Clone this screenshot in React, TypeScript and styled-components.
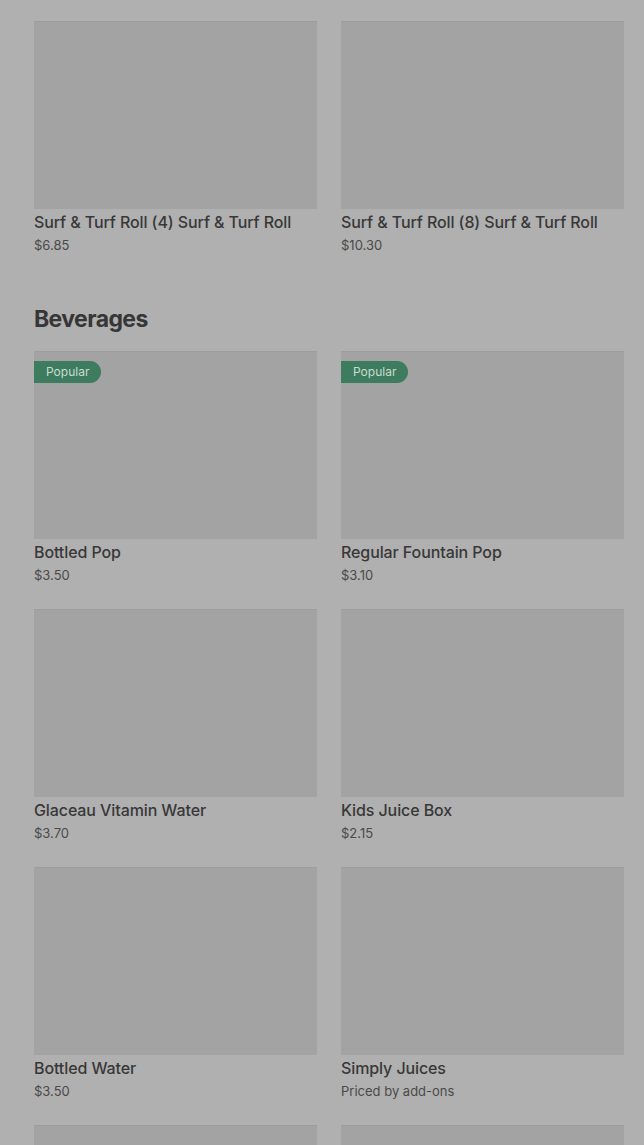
import * as React from 'react';
import styled, { createGlobalStyle } from "styled-components";

type Item = {
    name: string,
    price: string,
    popular?: boolean,
};

const GlobalStyle = createGlobalStyle`
    html, body {
        margin: 0;
        padding: 0;
        background: #b0b0b0;
    }
    body {
        font-family: Inter, "Noto Sans", "Liberation Sans", sans-serif;
        color: #383838;
        overflow: hidden;
    }
`;

const Page = styled.main`
    padding: 21px 20px 0 34px;
    height: 1145px;
    overflow: hidden;
    box-sizing: border-box;
`;

const Section = styled.section`
    margin-bottom: 48px;
`;

const SectionHeading = styled.h2`
    margin: 0 0 16px;
    font-size: 23px;
    line-height: 32px;
    font-weight: 700;
    letter-spacing: -0.6px;
    color: #363636;
`;

const Grid = styled.div`
    display: grid;
    grid-template-columns: 283px 283px;
    column-gap: 24px;
    row-gap: 24px;
`;

const Card = styled.div`
    display: flex;
    flex-direction: column;
`;

const Thumb = styled.div`
    position: relative;
    height: 188px;
    background: #a3a3a3;
    border-top: 1px solid #9d9d9d;
    box-sizing: border-box;
`;

const Badge = styled.span`
    position: absolute;
    top: 9px;
    left: 0;
    padding: 0 12px;
    height: 22px;
    line-height: 22px;
    font-size: 12px;
    color: #c9dbd0;
    background: #3e7c5f;
    border-radius: 0 11px 11px 0;
`;

const Title = styled.div`
    margin-top: 1px;
    font-size: 16px;
    line-height: 24px;
    font-weight: 500;
    color: #383838;
    letter-spacing: -0.1px;
    white-space: nowrap;
`;

const Price = styled.div`
    margin-top: 1px;
    font-size: 13px;
    line-height: 20px;
    color: #4a4a4a;
`;

const rolls: Item[] = [
    { name: "Surf & Turf Roll (4) Surf & Turf Roll", price: "$6.85" },
    { name: "Surf & Turf Roll (8) Surf & Turf Roll", price: "$10.30" },
];

const beverages: Item[] = [
    { name: "Bottled Pop", price: "$3.50", popular: true },
    { name: "Regular Fountain Pop", price: "$3.10", popular: true },
    { name: "Glaceau Vitamin Water", price: "$3.70" },
    { name: "Kids Juice Box", price: "$2.15" },
    { name: "Bottled Water", price: "$3.50" },
    { name: "Simply Juices", price: "Priced by add-ons" },
    { name: "", price: "" },
    { name: "", price: "" },
];

const ItemCard: React.FC<{ item: Item }> = ({ item }) => (
    <Card>
        <Thumb>
            {item.popular ? <Badge>Popular</Badge> : ""}
        </Thumb>
        {item.name ? <Title>{item.name}</Title> : ""}
        {item.price ? <Price>{item.price}</Price> : ""}
    </Card>
);

const App: React.FC = () => {
    return (
        <>
            <GlobalStyle/>
            <Page>
                <Section>
                    <Grid>
                        {rolls.map((item, i) => <ItemCard key={i} item={item}/>)}
                    </Grid>
                </Section>
                <Section>
                    <SectionHeading>Beverages</SectionHeading>
                    <Grid>
                        {beverages.map((item, i) => <ItemCard key={i} item={item}/>)}
                    </Grid>
                </Section>
            </Page>
        </>
    );
}

export default App;
